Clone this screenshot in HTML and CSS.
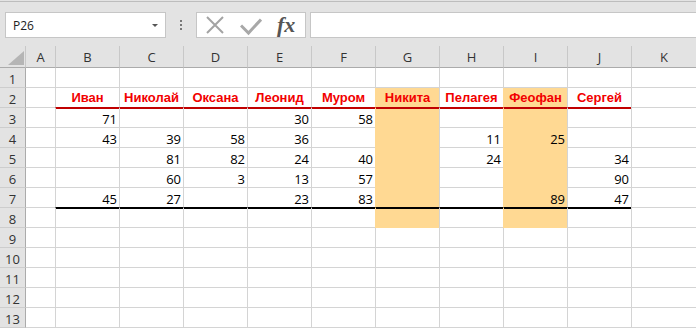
FILE: index.html
```html
<!DOCTYPE html>
<html lang="ru">
<head>
  <meta charset="UTF-8" />
  <meta name="viewport" content="width=device-width, initial-scale=1.0"/>
  <title>Книга1 - Excel</title>
  <link rel="stylesheet" href="styles.css">
</head>
<body>
  <!-- formula bar -->
  <div class="topbar">
    <div class="namebox"><span>P26</span><i class="drop"></i></div>
    <div class="grip"><i></i><i></i><i></i></div>
    <div class="fx-buttons">
      <svg class="ico-x" width="18" height="24" viewBox="0 0 18 24">
        <path d="M1 4 L17 20 M17 4 L1 20" />
      </svg>
      <svg class="ico-ok" width="22" height="24" viewBox="0 0 22 24">
        <path d="M1 12.5 L8.5 20 L21 6.5" />
      </svg>
      <span class="fx">fx</span>
    </div>
    <div class="formula"></div>
  </div>

  <!-- sheet -->
  <div class="sheet">
    <div class="row head">
      <div class="corner"><svg width="16" height="14" viewBox="0 0 16 14"><polygon points="0,14 16,14 16,0" /></svg></div>
      <div class="hc">A</div><div class="hc">B</div><div class="hc">C</div><div class="hc">D</div>
      <div class="hc">E</div><div class="hc">F</div><div class="hc">G</div><div class="hc">H</div>
      <div class="hc">I</div><div class="hc">J</div><div class="hc">K</div>
    </div>

    <div class="row">
      <div class="rh">1</div><div class="c"></div>
      <div class="c"></div><div class="c"></div><div class="c"></div><div class="c"></div><div class="c"></div>
      <div class="c"></div><div class="c"></div><div class="c"></div><div class="c"></div><div class="c"></div>
    </div>

    <div class="row">
      <div class="rh">2</div><div class="c"></div>
      <div class="c name ul-red">Иван</div>
      <div class="c name ul-red">Николай</div>
      <div class="c name ul-red">Оксана</div>
      <div class="c name ul-red">Леонид</div>
      <div class="c name ul-red">Муром</div>
      <div class="c name fill ul-red">Никита</div>
      <div class="c name ul-red">Пелагея</div>
      <div class="c name fill ul-red">Феофан</div>
      <div class="c name ul-red">Сергей</div>
      <div class="c"></div>
    </div>

    <div class="row">
      <div class="rh">3</div><div class="c"></div>
      <div class="c ol-red">71</div>
      <div class="c ol-red"></div>
      <div class="c ol-red"></div>
      <div class="c ol-red">30</div>
      <div class="c ol-red">58</div>
      <div class="c fill ol-red"></div>
      <div class="c ol-red"></div>
      <div class="c fill ol-red"></div>
      <div class="c ol-red"></div>
      <div class="c"></div>
    </div>

    <div class="row">
      <div class="rh">4</div><div class="c"></div>
      <div class="c">43</div>
      <div class="c">39</div>
      <div class="c">58</div>
      <div class="c">36</div>
      <div class="c"></div>
      <div class="c fill"></div>
      <div class="c">11</div>
      <div class="c fill">25</div>
      <div class="c"></div>
      <div class="c"></div>
    </div>

    <div class="row">
      <div class="rh">5</div><div class="c"></div>
      <div class="c"></div>
      <div class="c">81</div>
      <div class="c">82</div>
      <div class="c">24</div>
      <div class="c">40</div>
      <div class="c fill"></div>
      <div class="c">24</div>
      <div class="c fill"></div>
      <div class="c">34</div>
      <div class="c"></div>
    </div>

    <div class="row">
      <div class="rh">6</div><div class="c"></div>
      <div class="c"></div>
      <div class="c">60</div>
      <div class="c">3</div>
      <div class="c">13</div>
      <div class="c">57</div>
      <div class="c fill"></div>
      <div class="c"></div>
      <div class="c fill"></div>
      <div class="c">90</div>
      <div class="c"></div>
    </div>

    <div class="row">
      <div class="rh">7</div><div class="c"></div>
      <div class="c ul-black">45</div>
      <div class="c ul-black">27</div>
      <div class="c ul-black"></div>
      <div class="c ul-black">23</div>
      <div class="c ul-black">83</div>
      <div class="c fill ul-black"></div>
      <div class="c ul-black"></div>
      <div class="c fill ul-black">89</div>
      <div class="c ul-black">47</div>
      <div class="c"></div>
    </div>

    <div class="row">
      <div class="rh">8</div><div class="c"></div>
      <div class="c ol-black"></div>
      <div class="c ol-black"></div>
      <div class="c ol-black"></div>
      <div class="c ol-black"></div>
      <div class="c ol-black"></div>
      <div class="c fill ol-black"></div>
      <div class="c ol-black"></div>
      <div class="c fill ol-black"></div>
      <div class="c ol-black"></div>
      <div class="c"></div>
    </div>

    <div class="row">
      <div class="rh">9</div><div class="c"></div>
      <div class="c"></div><div class="c"></div><div class="c"></div><div class="c"></div><div class="c"></div>
      <div class="c"></div><div class="c"></div><div class="c"></div><div class="c"></div><div class="c"></div>
    </div>

    <div class="row">
      <div class="rh">10</div><div class="c"></div>
      <div class="c"></div><div class="c"></div><div class="c"></div><div class="c"></div><div class="c"></div>
      <div class="c"></div><div class="c"></div><div class="c"></div><div class="c"></div><div class="c"></div>
    </div>

    <div class="row">
      <div class="rh">11</div><div class="c"></div>
      <div class="c"></div><div class="c"></div><div class="c"></div><div class="c"></div><div class="c"></div>
      <div class="c"></div><div class="c"></div><div class="c"></div><div class="c"></div><div class="c"></div>
    </div>

    <div class="row">
      <div class="rh">12</div><div class="c"></div>
      <div class="c"></div><div class="c"></div><div class="c"></div><div class="c"></div><div class="c"></div>
      <div class="c"></div><div class="c"></div><div class="c"></div><div class="c"></div><div class="c"></div>
    </div>

    <div class="row">
      <div class="rh">13</div><div class="c"></div>
      <div class="c"></div><div class="c"></div><div class="c"></div><div class="c"></div><div class="c"></div>
      <div class="c"></div><div class="c"></div><div class="c"></div><div class="c"></div><div class="c"></div>
    </div>
  </div>
</body>
</html>
```

FILE: styles.css
```css
body {
  margin: 0;
  background-color: #e3e3e3;
  font-family: 'Open Sans', 'Noto Sans', sans-serif;
  overflow: hidden;
}

/* formula bar */

.topbar {
  box-sizing: border-box;
  height: 45px;
  margin-top: 1px;
  padding-top: 10px;
  border-top: 1px solid #bdbdbd;
  display: flex;
  align-items: flex-start;
}

.namebox {
  box-sizing: border-box;
  width: 161px;
  height: 26px;
  margin-left: 5px;
  padding: 0 7px;
  background-color: white;
  border: 1px solid #c6c6c6;
  display: flex;
  justify-content: space-between;
  align-items: center;
  font-size: 12px;
  color: #222;
}

.drop {
  width: 0;
  height: 0;
  border-left: 3px solid transparent;
  border-right: 3px solid transparent;
  border-top: 3px solid #555;
}

.grip {
  margin: 8px 0 0 14px;
  display: flex;
  flex-direction: column;
  gap: 2px;
}

.grip i {
  width: 2px;
  height: 2px;
  background-color: #777;
}

.fx-buttons {
  box-sizing: border-box;
  width: 110px;
  height: 26px;
  margin-left: 14px;
  padding-left: 9px;
  background-color: white;
  border: 1px solid #c6c6c6;
  display: flex;
  align-items: center;
}

.fx-buttons svg {
  fill: none;
  stroke-linecap: butt;
}

.ico-x path {
  stroke: #a3a3a3;
  stroke-width: 2;
}

.ico-ok {
  margin-left: 16px;
}

.ico-ok path {
  stroke: #a8a8a8;
  stroke-width: 3;
}

.fx {
  margin-left: 15px;
  font-family: 'Liberation Serif', serif;
  font-style: italic;
  font-weight: bold;
  font-size: 22px;
  line-height: 24px;
  color: #555;
}

.formula {
  flex: 1;
  height: 26px;
  margin-left: 4px;
  box-sizing: border-box;
  background-color: white;
  border: 1px solid #c6c6c6;
  border-right: none;
}

/* sheet */

.sheet {
  background-color: white;
  font-size: 13px;
  line-height: 16px;
}

.row {
  display: grid;
  grid-template-columns: 25px 30px repeat(9, 64px) 65px;
  height: 20px;
}

.row.head {
  height: 22px;
}

.corner,
.hc,
.rh {
  box-sizing: border-box;
  background-color: #e3e3e3;
  color: #333;
}

.corner {
  border-bottom: 1px solid #ababab;
  display: flex;
  justify-content: flex-end;
  align-items: flex-end;
  padding: 0 1px 2px 0;
}

.corner polygon {
  fill: #b5b5b5;
}

.hc {
  border-left: 1px solid #c8c8c8;
  border-bottom: 1px solid #ababab;
  display: flex;
  justify-content: center;
  align-items: center;
}

.rh {
  border-bottom: 1px solid #cdcdcd;
  display: flex;
  justify-content: center;
  align-items: flex-end;
}

.c {
  box-sizing: border-box;
  padding: 0 2px;
  border-left: 1px solid #d4d4d4;
  border-bottom: 1px solid #d4d4d4;
  display: flex;
  justify-content: flex-end;
  align-items: flex-end;
  color: black;
}

.rh + .c {
  border-left-color: #ababab;
}

.c.name {
  justify-content: center;
  padding-bottom: 1px;
  font-family: 'Liberation Sans', Arial, sans-serif;
  font-weight: bold;
  color: #f20000;
}

.c.fill {
  background-color: #ffd993;
  border-left-color: #ffd993;
  border-bottom-color: #ffd993;
}

.c.ul-red {
  border-bottom-color: #c00000;
}

.c.ol-red {
  box-shadow: inset 0 1px 0 #c00000;
}

.c.ul-black {
  border-bottom-color: black;
}

.c.ol-black {
  box-shadow: inset 0 1px 0 black;
}
```
